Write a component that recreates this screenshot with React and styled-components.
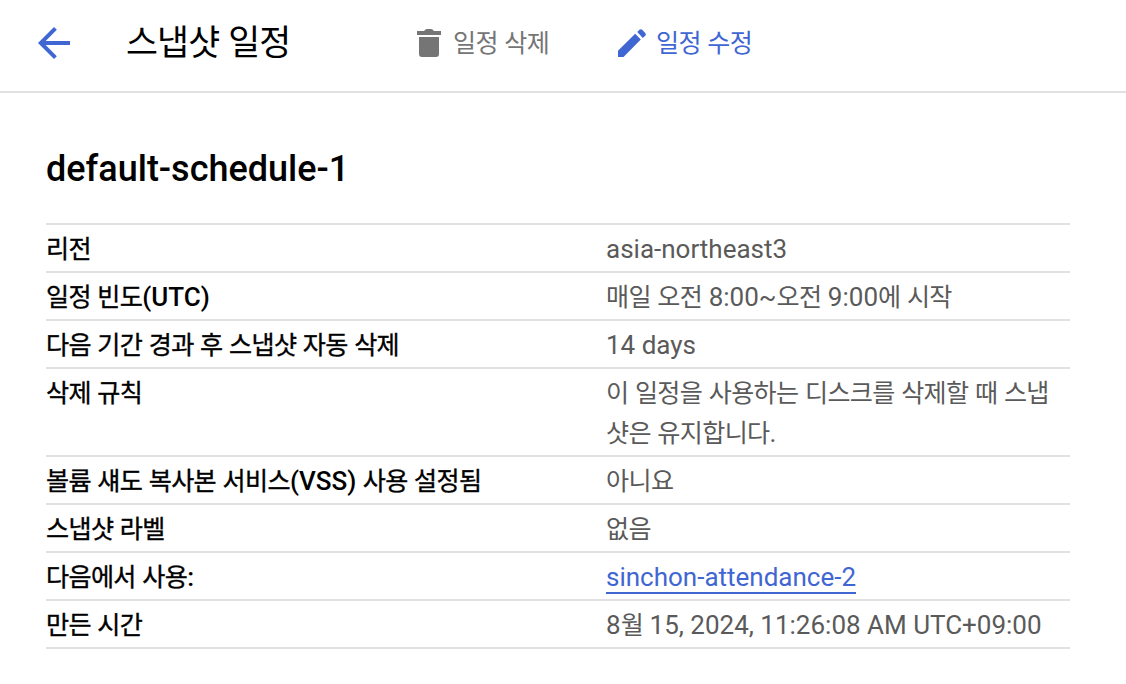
import React from 'react';
import styled, { createGlobalStyle } from 'styled-components';

const Global = createGlobalStyle`
  * { box-sizing: border-box; }
  body { margin: 0; background: #fff; font-family: Roboto, "Noto Sans CJK KR", sans-serif; overflow: hidden; }
`;
const Page = styled.div`
  width: 1126px;
  height: 684px;
  background: #fff;
`;
const Hangul = styled.span`
  font-size: 0.965em;
  line-height: 1;
  letter-spacing: -0.025em;
`;
const Toolbar = styled.header`
  display: flex;
  align-items: center;
  height: 93px;
  padding: 0 0 5px 38px;
  border-bottom: 2px solid #e0e0e0;
`;
const Title = styled.h1`
  margin: 0 0 0 56px;
  width: 291px;
  font-size: 36px;
  line-height: 48px;
  font-weight: 400;
  color: #000;
  white-space: nowrap;
`;
const Action = styled.button`
  display: flex;
  align-items: center;
  gap: ${(p) => p.$gap}px;
  width: ${(p) => p.$width}px;
  padding: 0;
  border: 0;
  background: none;
  font: 400 26px/40px Roboto, "Noto Sans CJK KR", sans-serif;
  color: ${(p) => p.$color};
  white-space: nowrap;
`;
const Icon = styled.svg`
  display: block;
  flex: none;
  fill: currentColor;
`;
const Back = styled.a`
  color: #3f66d2;
`;
const Content = styled.main`
  padding: 52px 56px 0 46px;
`;
const Name = styled.h2`
  margin: 0 0 30px;
  font-size: 36px;
  line-height: 48px;
  font-weight: 500;
  color: #000;
`;
const Details = styled.dl`
  margin: 0;
  border-top: 2px solid #e0e0e0;
`;
const Row = styled.div`
  display: grid;
  grid-template-columns: 560px 1fr;
  padding: 4px 0 2px;
  border-bottom: 2px solid #e0e0e0;
  font-size: 26px;
  line-height: 40px;
`;
const Label = styled.dt`
  font-weight: 500;
  color: #000;
  white-space: nowrap;

  ${Hangul} {
    font-weight: 400;
    -webkit-text-stroke: 0.35px currentColor;
  }
`;
const Value = styled.dd`
  margin: 0;
  color: #5a5a5a;
  white-space: pre;
`;
const Link = styled.a`
  color: #3f66d2;
  border-bottom: 2px solid #3f66d2;
`;

// Korean syllables are set slightly tighter than the Latin text around them.
const Text = ({ children }) => (
  <span>
    {children.split(/([가-힣]+)/).map((part, i) => (i % 2 ? <Hangul key={i}>{part}</Hangul> : part))}
  </span>
);

const rows = [
  ['리전', 'asia-northeast3'],
  ['일정 빈도(UTC)', '매일 오전 8:00~오전 9:00에 시작'],
  ['다음 기간 경과 후 스냅샷 자동 삭제', '14 days'],
  ['삭제 규칙', '이 일정을 사용하는 디스크를 삭제할 때 스냅\n샷은 유지합니다.'],
  ['볼륨 섀도 복사본 서비스(VSS) 사용 설정됨', '아니요'],
  ['스냅샷 라벨', '없음'],
  ['다음에서 사용:', 'sinchon-attendance-2', true],
  ['만든 시간', '8월 15, 2024, 11:26:08 AM UTC+09:00'],
];

export default function App() {
  return (
    <Page>
      <Global />
      <Toolbar>
        <Back aria-label="뒤로">
          <Icon width="32" height="32" viewBox="4 4 16 16"><path d="M20 11H7.83l5.59-5.59L12 4l-8 8 8 8 1.41-1.41L7.83 13H20v-2z" /></Icon>
        </Back>
        <Title><Text>스냅샷 일정</Text></Title>
        <Action $gap={12} $width={201} $color="#757575">
          <Icon width="24" height="28" viewBox="0 0 24 28"><path d="M0 2h7q1.5-2 3-2h4q1.5 0 3 2h7v4H0zM2 8h20v17q0 3-3 3H5q-3 0-3-3z" /></Icon>
          <Text>일정 삭제</Text>
        </Action>
        <Action $gap={10} $width={140} $color="#3f66d2">
          <Icon width="28" height="28" viewBox="0 0 28 28"><path d="M0 21.8 17.2 4.8l5.6 5.6L5.5 28H0zM19.3 3l2.1-2.2q1.4-1.3 2.8 0l3 3.2q1.3 1.4 0 2.8l-2.4 2.1z" /></Icon>
          <Text>일정 수정</Text>
        </Action>
      </Toolbar>
      <Content>
        <Name>default-schedule-1</Name>
        <Details>
          {rows.map(([label, value, linked]) => (
            <Row key={label}>
              <Label><Text>{label}</Text></Label>
              <Value>{linked ? <Link>{value}</Link> : <Text>{value}</Text>}</Value>
            </Row>
          ))}
        </Details>
      </Content>
    </Page>
  );
}
